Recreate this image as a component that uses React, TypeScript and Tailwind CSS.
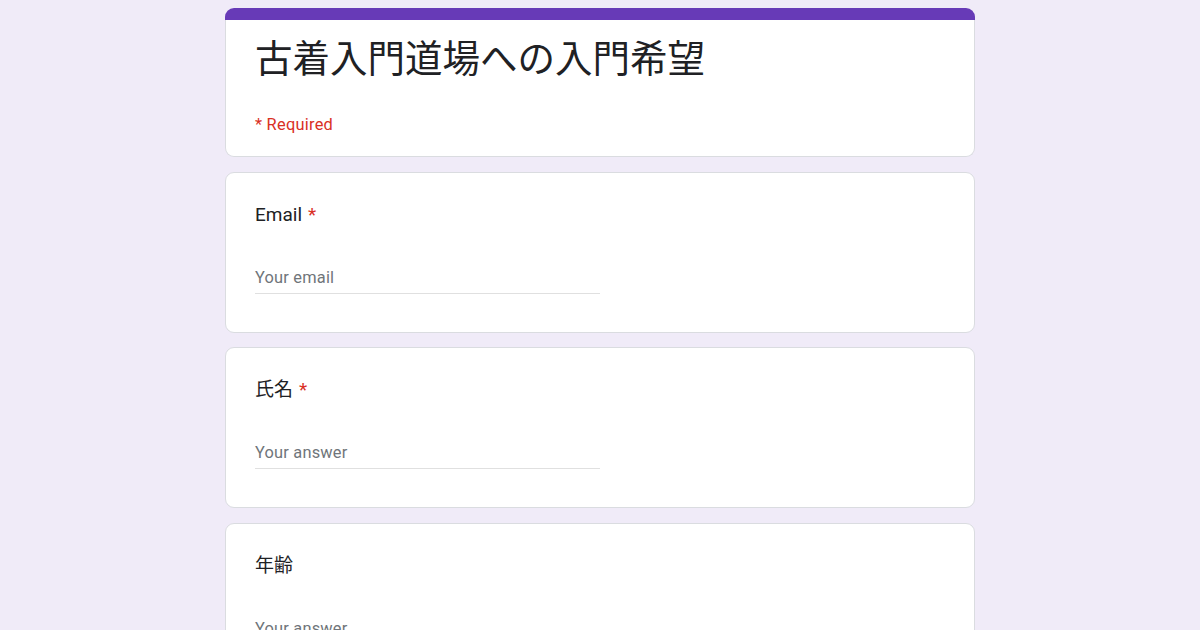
import React from "react";

const font = { fontFamily: 'Roboto, "Noto Sans CJK JP", sans-serif' };

function Question({
  label,
  placeholder,
  required,
  className,
}: {
  label: string;
  placeholder: string;
  required?: boolean;
  className?: string;
}) {
  return (
    <div className={"w-[750px] rounded-[9px] border border-[#dadce0] bg-white px-[29px] pt-[28px] pb-[38px] " + (className ?? "")}>
      <div className="text-[19px] leading-[28px] text-[#202124]">
        {label}
        {required && <span className="ml-[6px] text-[#d93025]">*</span>}
      </div>
      <div className="mt-[39px] w-[345px] border-b border-[#e0e0e0] pb-[5px] text-[16.4px] leading-[20px] tracking-[0.2px] text-[#70757a]">
        {placeholder}
      </div>
    </div>
  );
}

export default function App() {
  return (
    <div className="min-h-[630px] w-full bg-[#f0ebf8] pt-[8px]" style={font}>
      <div className="mx-auto flex w-[750px] flex-col">
        <div className="w-[750px]">
          <div className="h-[12px] rounded-t-[9px] bg-[#673ab7]" />
          <div className="rounded-b-[9px] border-x border-b border-[#dadce0] bg-white px-[29px] pt-[17px] pb-[21px]">
            <div className="text-[37.5px] leading-[44px] text-[#202124]">古着入門道場への入門希望</div>
            <div className="mt-[34px] text-[16.4px] leading-[20px] tracking-[0.25px] text-[#d93025]">* Required</div>
          </div>
        </div>
        <Question className="mt-[15px]" label="Email" placeholder="Your email" required />
        <Question className="mt-[14px]" label="氏名" placeholder="Your answer" required />
        <Question className="mt-[15px]" label="年齢" placeholder="Your answer" />
      </div>
    </div>
  );
}
